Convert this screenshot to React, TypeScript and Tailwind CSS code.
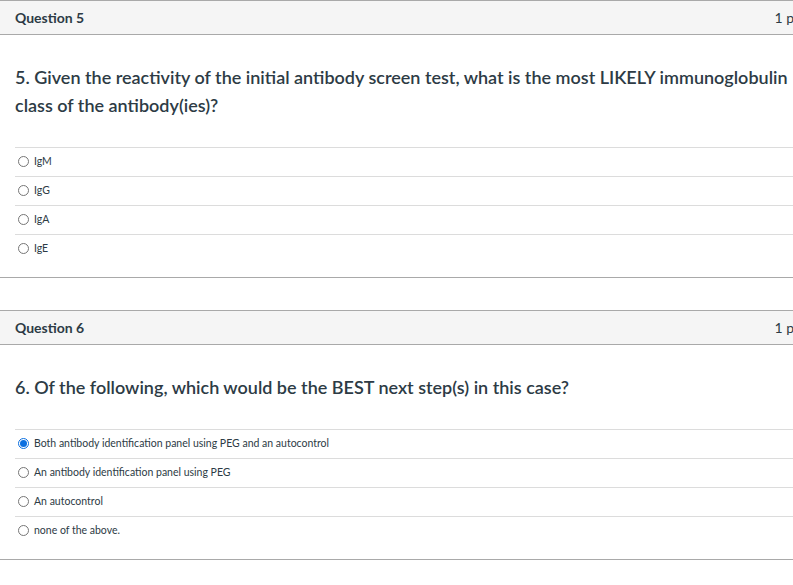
import React from 'react';

interface Question {
  id: number;
  text: string;
  answers: string[];
  selected?: number;
}

const questions: Question[] = [
  {
    id: 5,
    text: '5. Given the reactivity of the initial antibody screen test, what is the most LIKELY immunoglobulin class of the antibody(ies)?',
    answers: ['IgM', 'IgG', 'IgA', 'IgE'],
  },
  {
    id: 6,
    text: '6. Of the following, which would be the BEST next step(s) in this case?',
    answers: [
      'Both antibody identification panel using PEG and an autocontrol',
      'An antibody identification panel using PEG',
      'An autocontrol',
      'none of the above.',
    ],
    selected: 0,
  },
];

function Radio({ checked }: { checked?: boolean }) {
  return checked ? (
    <span className="w-[11px] h-[11px] rounded-full border border-[#0b6fe0] bg-white flex items-center justify-center shrink-0">
      <span className="w-[7px] h-[7px] rounded-full bg-[#0b6fe0]" />
    </span>
  ) : (
    <span className="w-[11px] h-[11px] rounded-full border border-[#767676] bg-white shrink-0" />
  );
}

function QuestionBlock({ q }: { q: Question }) {
  return (
    <div className="border-y border-[#a9a9a9] bg-white">
      {/* Header */}
      <div className="h-[34px] bg-[#f5f5f5] border-b border-[#a9a9a9] px-[15px] flex items-center justify-between">
        <span className="text-[14px] font-bold text-[#2d3b45]">Question {q.id}</span>
        <span className="text-[14px] text-[#2d3b45]">1 pts</span>
      </div>

      <div className="px-[15px] pt-[28px] pb-[14px]">
        <p className="text-[18px] leading-[28px] font-semibold text-[#2d3b45]">{q.text}</p>

        <div className="mt-[28px]">
          {q.answers.map((a, i) => (
            <div key={i} className="border-t border-[#dcdcdc] pt-[5px] pb-[7px] pl-[3px] flex items-center gap-[5px]">
              <Radio checked={q.selected === i} />
              <span className="text-[10.5px] leading-[16px] text-[#2d3b45]">{a}</span>
            </div>
          ))}
        </div>
      </div>
    </div>
  );
}

export default function App() {
  return (
    <div className="w-screen h-screen overflow-hidden bg-white" style={{ fontFamily: 'Lato, "Open Sans", sans-serif' }}>
      <div className="w-[820px] flex flex-col gap-[32px]">
        {questions.map((q) => (
          <QuestionBlock key={q.id} q={q} />
        ))}
      </div>
    </div>
  );
}
